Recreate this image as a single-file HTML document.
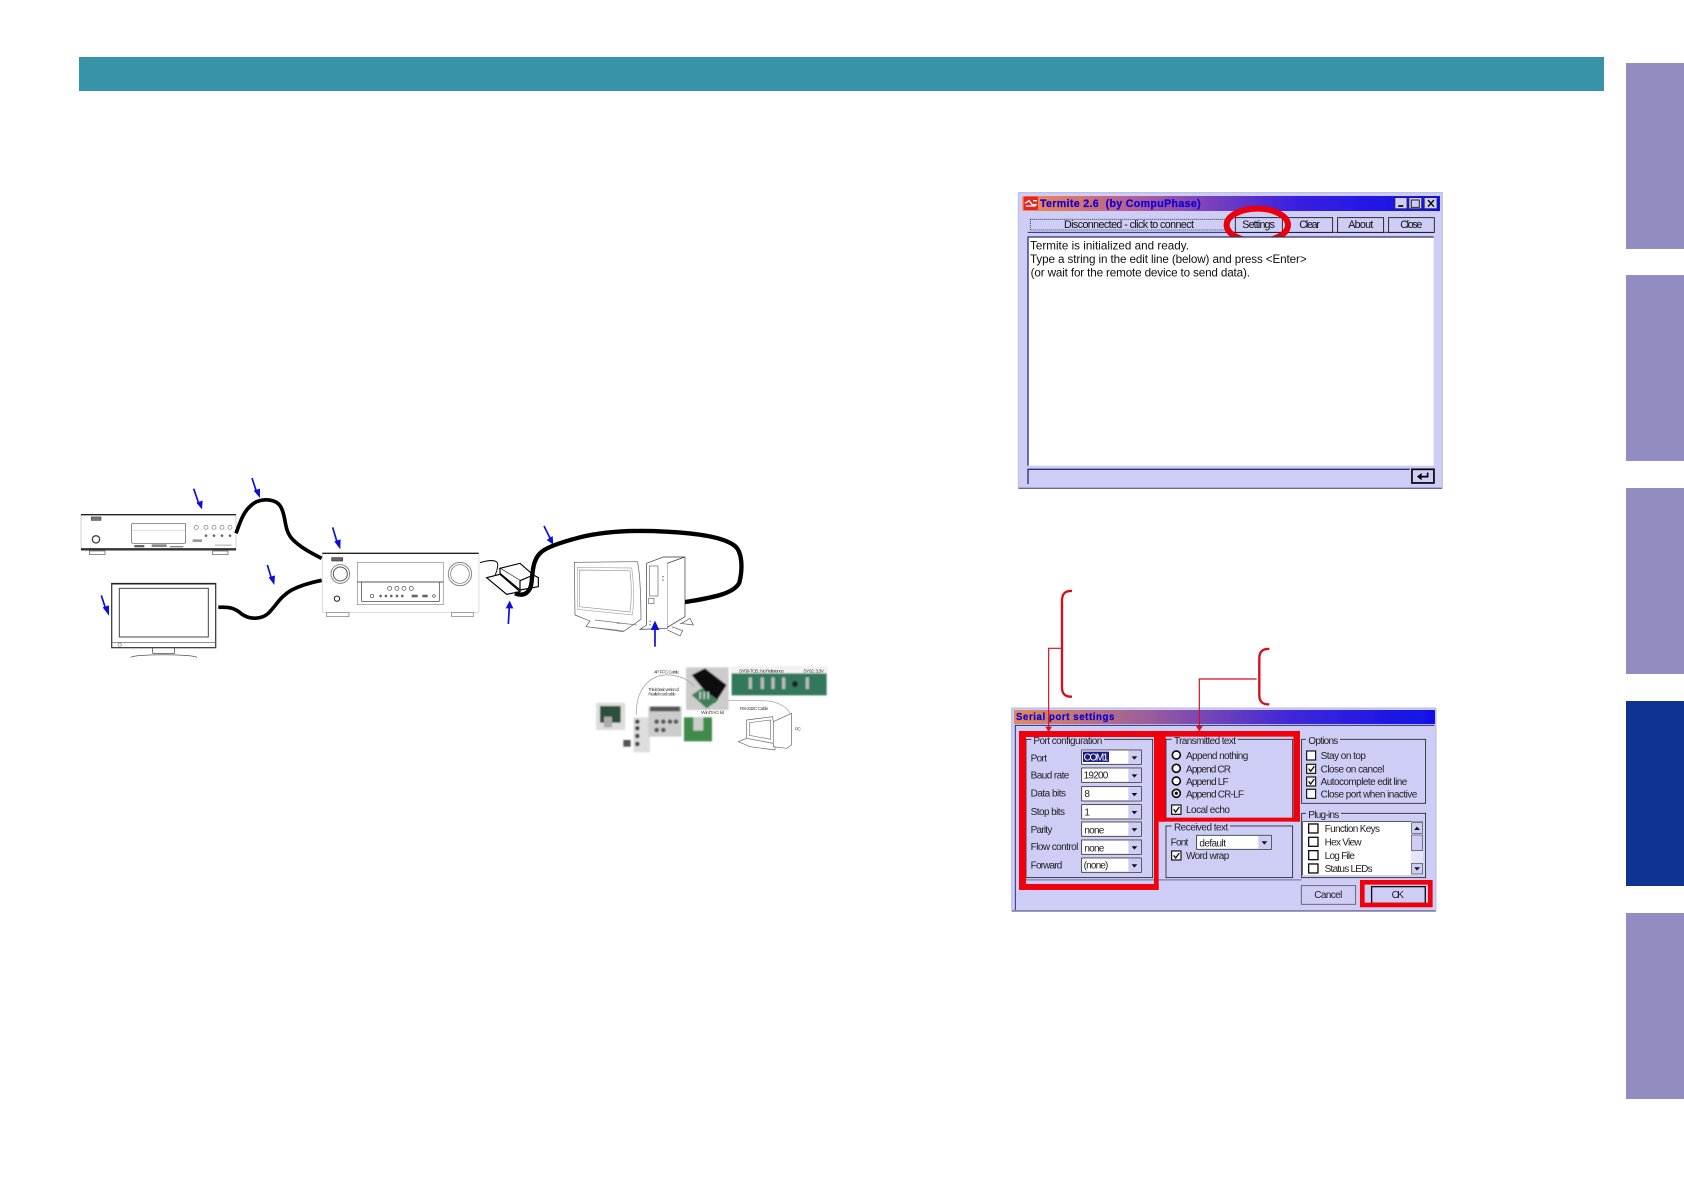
<!DOCTYPE html>
<html><head><meta charset="utf-8"><style>
html,body{margin:0;padding:0;background:#fff;width:1684px;height:1191px;overflow:hidden}
.a{position:absolute}
svg{position:absolute;left:0;top:0}
text{font-family:"Liberation Sans",sans-serif}
</style></head><body>
<div class="a" style="left:79px;top:57px;width:1525px;height:34px;background:#3892a8"></div>
<div class="a" style="left:1626px;top:63px;width:58px;height:186px;background:#928dc0"></div>
<div class="a" style="left:1626px;top:275px;width:58px;height:186px;background:#928dc0"></div>
<div class="a" style="left:1626px;top:488px;width:58px;height:186px;background:#928dc0"></div>
<div class="a" style="left:1626px;top:701px;width:58px;height:185px;background:#0f3390"></div>
<div class="a" style="left:1626px;top:913px;width:58px;height:186px;background:#928dc0"></div>
<svg width="1684" height="1191" viewBox="0 0 1684 1191" xmlns="http://www.w3.org/2000/svg">
<defs>
<filter id="b"><feGaussianBlur stdDeviation="1"/></filter>
<filter id="t"><feGaussianBlur stdDeviation=".7"/></filter>
<filter id="b2"><feGaussianBlur stdDeviation="2.4"/></filter>
<linearGradient id="g1" x1="0" x2="1" y1="0" y2="0"><stop offset="0" stop-color="#f58a4e"/><stop offset=".3" stop-color="#a85aa0"/><stop offset=".65" stop-color="#3a20e0"/><stop offset="1" stop-color="#1010e8"/></linearGradient>
<linearGradient id="g2" x1="0" x2="1" y1="0" y2="0"><stop offset="0" stop-color="#e08a5c"/><stop offset=".3" stop-color="#a06098"/><stop offset=".65" stop-color="#4028d8"/><stop offset="1" stop-color="#1010e8"/></linearGradient>
</defs>

<!-- Diagram left -->
<g transform="translate(70,470) scale(.3333)" filter="url(#b)" fill="none" stroke="#222" stroke-width="2">
<rect x="33" y="134" width="465" height="105" fill="#fff" stroke="#bbb"/>
<path d="M33 134H498" stroke="#222" stroke-width="4"/>
<path d="M33 238H498" stroke="#333" stroke-width="7"/>
<rect x="58" y="243" width="47" height="11" stroke="#555"/><rect x="428" y="243" width="46" height="11" stroke="#555"/>
<rect x="64" y="141" width="29" height="10" fill="#777" stroke="#444"/>
<circle cx="78" cy="208" r="11" stroke-width="4" stroke="#444"/>
<rect x="185" y="160" width="162" height="60" rx="4" stroke="#555"/><path d="M187 182H345" stroke="#ccc"/>
<g stroke="#777"><circle cx="379" cy="172" r="6"/><circle cx="408" cy="172" r="6"/><circle cx="432" cy="172" r="6"/><circle cx="456" cy="172" r="6"/><circle cx="480" cy="172" r="6"/></g>
<g fill="#666" stroke="none"><circle cx="408" cy="197" r="4"/><circle cx="432" cy="197" r="4"/><circle cx="456" cy="197" r="4"/><circle cx="480" cy="197" r="4"/><rect x="193" y="225" width="30" height="7"/><rect x="245" y="223" width="45" height="8" fill="#888"/><rect x="368" y="208" width="28" height="8" fill="#999"/><rect x="300" y="228" width="40" height="4" fill="#888"/><rect x="435" y="224" width="50" height="3" fill="#aaa"/></g>

<rect x="125" y="341" width="312" height="192" fill="#fff" stroke="#444" stroke-width="4"/>
<path d="M125 341H437" stroke-width="5"/>
<rect x="148" y="355" width="267" height="146" stroke="#444" stroke-width="3"/>
<path d="M125 517H437" stroke="#555"/><circle cx="149" cy="524" r="5" stroke="#888"/>
<path d="M248 533V550M314 533V550M248 550H314M182 562C200 552 360 552 381 562" stroke="#333"/>

<rect x="757" y="251" width="470" height="176" fill="#fff" stroke="#ccc"/>
<path d="M757 250H1226" stroke-width="4"/>
<rect x="785" y="263" width="33" height="10" fill="#666" stroke="#333"/>
<circle cx="811" cy="312" r="28" stroke="#888" stroke-width="3"/><circle cx="811" cy="312" r="21" stroke="#555" stroke-width="3"/>
<circle cx="1170" cy="312" r="35" stroke="#888" stroke-width="3"/><circle cx="1170" cy="312" r="28" stroke="#666" stroke-width="2"/>
<circle cx="801" cy="386" r="8" stroke-width="3"/>
<rect x="862" y="277" width="258" height="127" stroke="#888"/>
<rect x="875" y="336" width="233" height="58" stroke="#333"/>
<path d="M862 336H1120" stroke="#555" stroke-width="3"/>
<g stroke="#444"><circle cx="959" cy="355" r="6"/><circle cx="981" cy="355" r="6"/><circle cx="1002" cy="355" r="6"/><circle cx="1024" cy="355" r="6"/><circle cx="906" cy="378" r="5"/><circle cx="1092" cy="378" r="4"/></g>
<g fill="#666" stroke="none"><circle cx="932" cy="378" r="4"/><circle cx="948" cy="378" r="4"/><circle cx="964" cy="378" r="4"/><circle cx="981" cy="378" r="4"/><circle cx="997" cy="378" r="4"/><rect x="1025" y="374" width="18" height="8"/><rect x="1057" y="374" width="16" height="8"/></g>
<rect x="770" y="427" width="67" height="13" stroke="#777"/><rect x="1145" y="427" width="65" height="13" stroke="#777"/>

<path d="M498 190C510 160 520 115 560 95C585 85 620 88 632 110C650 140 640 175 665 205C690 232 725 250 755 265" stroke="#000" stroke-width="11"/>
<path d="M445 412C480 410 495 415 515 432C540 450 575 448 595 430C620 405 630 380 665 360C695 345 725 337 755 331" stroke="#000" stroke-width="11"/>
<g stroke="#0a0ae0" stroke-width="5" fill="#0a0ae0">
<path d="M371 56L388 105"/><path d="M379 98L398 92L396 118Z" stroke="none"/>
<path d="M546 24L561 70"/><path d="M551 62L570 56L570 84Z" stroke="none"/>
<path d="M788 172L803 222"/><path d="M793 214L812 208L811 238Z" stroke="none"/>
<path d="M592 285L606 330"/><path d="M596 322L615 316L613 345Z" stroke="none"/>
<path d="M94 376L108 420"/><path d="M98 412L117 406L117 437Z" stroke="none"/>
</g>
</g>

<!-- Diagram right -->
<g transform="translate(480,510) scale(.3333)" filter="url(#b)" fill="none" stroke="#222" stroke-width="2">
<path d="M0 158C20 152 45 148 52 158C56 170 48 190 42 203" stroke="#111" stroke-width="3"/>
<path d="M20 203L60 193L120 245L80 253Z" fill="#fff" stroke="#000" stroke-width="3.5"/>
<path d="M60 175L120 160L160 195L120 212Z" fill="#fff" stroke="#000" stroke-width="3.5"/>
<path d="M60 175V190L120 240V212M160 195L175 203V230L120 240" fill="#fff" stroke="#000" stroke-width="3.5"/>
<path d="M105 250C135 262 152 245 155 215C158 180 160 150 180 130C195 112 250 95 300 82C380 62 470 60 560 65C650 70 730 80 765 108C785 125 790 170 778 218C760 255 680 265 612 277" stroke="#000" stroke-width="13"/>
<path d="M283 157L472 155Q482 190 483 328L430 365L318 350L330 333L285 315Z" fill="#fff" stroke="#555"/>
<path d="M292 172L455 174Q466 250 457 315L292 298Z" stroke="#aaa" stroke-width="2"/>
<path d="M298 180L450 182Q458 250 450 306L298 290Z" stroke="#999" stroke-width="2"/>
<path d="M318 350L430 362M345 330L470 345M410 340h22" stroke="#777"/>
<path d="M500 160L550 141H615L562 160V355L480 358L500 345Z" fill="#fff" stroke="#333"/>
<path d="M562 160L615 141V320L562 352" fill="#fff" stroke="#333"/>
<rect x="508" y="168" width="26" height="90" stroke="#666"/><rect x="506" y="265" width="16" height="16" stroke="#666"/>
<path d="M562 360L600 378L608 362L575 350M600 340L640 345L630 325L605 340" stroke="#555" fill="#fff"/>
<g fill="#999" stroke="none"><rect x="546" y="198" width="6" height="4"/><rect x="546" y="208" width="6" height="4"/><rect x="508" y="332" width="5" height="4"/><rect x="508" y="342" width="5" height="4"/></g>
<g stroke="#0a0ae0" stroke-width="5" fill="#0a0ae0">
<path d="M192 48L212 88"/><path d="M200 90L218 78L220 104Z" stroke="none"/>
<path d="M85 342L88 290"/><path d="M77 295L89 272L100 295Z" stroke="none"/>
<path d="M525 410V355"/><path d="M512 360L525 332L538 360Z" stroke="none"/>
</g>
</g>

<!-- Thumbnail -->
<g transform="translate(590,660) scale(.3333)">
<g filter="url(#b2)">
<rect x="288" y="22" width="128" height="128" fill="#ccc"/>
<path d="M305 45L345 25L410 75L375 130Z" fill="#111"/>
<path d="M305 105L335 85L385 120L350 145Z" fill="#3d8058"/>
<g fill="#ccc"><rect x="328" y="95" width="5" height="22"/><rect x="340" y="95" width="5" height="22"/><rect x="352" y="95" width="5" height="22"/></g>
<rect x="425" y="22" width="285" height="84" fill="#33785a"/>
<rect x="425" y="22" width="285" height="18" fill="#f4f4f4"/>
<g fill="#bbb"><rect x="476" y="52" width="10" height="35"/><rect x="512" y="52" width="10" height="35"/><rect x="544" y="52" width="10" height="35"/><rect x="576" y="52" width="10" height="35"/><rect x="647" y="52" width="10" height="35"/></g>
<circle cx="615" cy="72" r="9" fill="#222"/>
<rect x="18" y="128" width="88" height="82" rx="6" fill="#ddd"/>
<rect x="30" y="138" width="62" height="50" fill="#2b4f3a"/>
<rect x="42" y="170" width="24" height="32" fill="#aaa"/>
<rect x="130" y="172" width="50" height="105" fill="#ddd"/>
<g fill="#444"><circle cx="142" cy="185" r="7"/><circle cx="142" cy="205" r="7"/><circle cx="142" cy="228" r="7"/><circle cx="142" cy="252" r="7"/></g>
<rect x="175" y="140" width="100" height="90" fill="#ccc"/>
<rect x="180" y="140" width="90" height="14" fill="#555"/>
<g fill="#555"><circle cx="200" cy="185" r="7"/><circle cx="220" cy="185" r="7"/><circle cx="240" cy="185" r="7"/><circle cx="258" cy="185" r="7"/><circle cx="200" cy="210" r="7"/><circle cx="220" cy="210" r="7"/></g>
<rect x="282" y="172" width="84" height="72" fill="#3f8a4c"/>
<rect x="310" y="172" width="30" height="40" fill="#ccc"/>
<rect x="100" y="240" width="22" height="20" fill="#555"/>
</g>
<g filter="url(#b)" fill="none" stroke="#999" stroke-width="2">
<path d="M140 165C135 90 180 40 240 45C275 48 295 60 312 78"/>
<path d="M415 122H520C560 122 590 140 600 160"/>
<path d="M470 180L548 170Q555 215 550 250L470 235Z" fill="#fff" stroke="#666"/>
<path d="M478 188L542 180V238L478 226Z" stroke="#777"/>
<path d="M470 235L445 245L480 260L555 270L555 250" stroke="#666"/>
<path d="M550 185L605 160V255L590 265L550 260Z" fill="#fff" stroke="#666"/>
</g>
<g filter="url(#b)" fill="#444" font-size="15">
<text x="192" y="40" textLength="75">4P FFC Cable</text>
<text x="447" y="37" textLength="135">SY06-TCB : No Reference</text>
<text x="640" y="37" textLength="62">SY02 : 3.3V</text>
<text x="175" y="93" textLength="92" font-size="13">This is basic version of</text>
<text x="175" y="107" textLength="82" font-size="13">Realtek cord cable</text>
<text x="333" y="162" textLength="70">WinlTAG kit</text>
<text x="450" y="150" textLength="85">RS-232C Cable</text>
<text x="615" y="212" textLength="18">PC</text>
</g>
</g>

<!-- Termite window -->
<g transform="translate(1005,180) scale(.3333)" filter="url(#t)">
<rect x="40" y="37" width="1272" height="889" fill="#cdcdf6"/>
<path d="M40 925H1312" stroke="#3a3a70" stroke-width="3"/>
<path d="M40 38H1312V925M40 38V925" fill="none" stroke="#b8b8e2" stroke-width="3"/>
<rect x="52" y="48" width="1253" height="45" fill="url(#g1)"/>
<rect x="56" y="50" width="43" height="40" rx="4" fill="#e82020"/>
<path d="M60 70L72 62L82 74H96M84 62H96M62 78H92" stroke="#fff" stroke-width="4" fill="none"/>
<text x="105" y="81" font-size="32" font-weight="700" fill="#0c00d4" stroke="#0c00d4" stroke-width=".6" textLength="482">Termite 2.6 &#160;(by CompuPhase)</text>
<g fill="#cdcdf6" stroke="#223" stroke-width="2"><rect x="1170" y="53" width="36" height="33"/><rect x="1212" y="53" width="38" height="33"/><rect x="1258" y="53" width="38" height="33"/></g>
<path d="M1180 78H1195" stroke="#000" stroke-width="5"/><rect x="1219" y="60" width="24" height="22" fill="none" stroke="#222" stroke-width="3"/><path d="M1269 60L1287 80M1287 60L1269 80" stroke="#000" stroke-width="4"/>
<path d="M68 157H1288" stroke="#2a2a70" stroke-width="3"/>
<rect x="76" y="118" width="590" height="32" fill="none" stroke="#222" stroke-width="2.5" stroke-dasharray="3 3"/>
<g fill="#cdcdf6" stroke="#111" stroke-width="2.5"><rect x="691" y="113" width="141" height="44"/><rect x="845" y="113" width="138" height="44"/><rect x="998" y="113" width="138" height="44"/><rect x="1151" y="113" width="137" height="44"/></g>
<g font-size="32" fill="#111">
<text x="177" y="144" textLength="390">Disconnected - click to connect</text>
<text x="712" y="144" textLength="98">Settings</text>
<text x="883" y="144" textLength="62">Clear</text>
<text x="1030" y="144" textLength="75">About</text>
<text x="1186" y="144" textLength="66">Close</text>
</g>
<ellipse cx="757" cy="135" rx="92" ry="49" fill="none" stroke="#e8000c" stroke-width="18"/>
<rect x="69" y="172" width="1217" height="685" fill="#fff"/>
<path d="M69 857V171H1286" fill="none" stroke="#2e2e78" stroke-width="4"/>
<g font-size="35" fill="#111">
<text x="75" y="209" textLength="477">Termite is initialized and ready.</text>
<text x="75" y="249" textLength="830">Type a string in the edit line (below) and press &lt;Enter&gt;</text>
<text x="77" y="290" textLength="658">(or wait for the remote device to send data).</text>
</g>
<path d="M69 912V868H1214" fill="none" stroke="#2e2e78" stroke-width="4"/>
<rect x="1221" y="868" width="66" height="41" fill="#cdcdf6" stroke="#000" stroke-width="5"/>
<path d="M1268 878V890H1245" fill="none" stroke="#000" stroke-width="5"/><path d="M1236 890L1250 879V901Z" fill="#000"/>
</g>

<!-- Serial dialog -->
<g transform="translate(1000,580) scale(.3333)" filter="url(#t)">
<rect x="35" y="383" width="1273" height="611" fill="#cdcdf6"/>
<path d="M35 993H1308" stroke="#3a3a70" stroke-width="3"/>
<path d="M35 384H1308V993M35 384V993" fill="none" stroke="#b8b8e2" stroke-width="3"/>
<rect x="42" y="390" width="1263" height="42" fill="url(#g2)"/>
<text x="48" y="420" font-size="29" font-weight="700" fill="#0c00d4" stroke="#0c00d4" stroke-width=".6" textLength="295">Serial port settings</text>
<path d="M46 990V436H1303" fill="none" stroke="#2e2e78" stroke-width="3"/>
<path d="M78 900H905" stroke="#2e2e78" stroke-width="2"/>
<g fill="none" stroke="#222" stroke-width="2.5">
<rect x="78" y="478" width="380" height="415"/>
<rect x="498" y="478" width="380" height="240"/>
<rect x="498" y="738" width="380" height="155"/>
<rect x="905" y="478" width="372" height="192"/>
<rect x="905" y="700" width="372" height="193"/>
</g>
<g fill="#cdcdf6"><rect x="94" y="470" width="218" height="20"/><rect x="515" y="470" width="198" height="20"/><rect x="515" y="730" width="175" height="20"/><rect x="918" y="470" width="102" height="20"/><rect x="918" y="692" width="105" height="20"/></g>
<g font-size="30" fill="#222">
<text x="100" y="492" textLength="207">Port configuration</text>
<text x="92" y="544" textLength="49">Port</text>
<text x="92" y="595" textLength="116">Baud rate</text>
<text x="92" y="650" textLength="106">Data bits</text>
<text x="92" y="705" textLength="103">Stop bits</text>
<text x="92" y="759" textLength="65">Parity</text>
<text x="92" y="810" textLength="143">Flow control</text>
<text x="92" y="865" textLength="95">Forward</text>
<text x="522" y="492" textLength="186">Transmitted text</text>
<text x="558" y="537" textLength="187">Append nothing</text>
<text x="558" y="577" textLength="135">Append CR</text>
<text x="558" y="615" textLength="128">Append LF</text>
<text x="558" y="652" textLength="174">Append CR-LF</text>
<text x="558" y="699" textLength="132">Local echo</text>
<text x="522" y="751" textLength="163">Received text</text>
<text x="512" y="796" textLength="53">Font</text>
<text x="558" y="837" textLength="130">Word wrap</text>
<text x="925" y="492" textLength="90">Options</text>
<text x="962" y="537" textLength="136">Stay on top</text>
<text x="962" y="577" textLength="191">Close on cancel</text>
<text x="962" y="615" textLength="260">Autocomplete edit line</text>
<text x="962" y="652" textLength="290">Close port when inactive</text>
<text x="925" y="714" textLength="93">Plug-ins</text>
</g>
<!-- combos -->
<g fill="#fff" stroke="#333" stroke-width="2.5">
<rect x="245" y="510" width="179" height="43"/><rect x="245" y="564" width="179" height="43"/><rect x="245" y="620" width="179" height="43"/><rect x="245" y="674" width="179" height="43"/><rect x="245" y="726" width="179" height="43"/><rect x="245" y="780" width="179" height="43"/><rect x="245" y="834" width="179" height="43"/><rect x="590" y="766" width="224" height="42"/>
</g>
<g fill="#cdcdf6"><rect x="385" y="512" width="38" height="40"/><rect x="385" y="566" width="38" height="40"/><rect x="385" y="622" width="38" height="40"/><rect x="385" y="676" width="38" height="40"/><rect x="385" y="728" width="38" height="40"/><rect x="385" y="782" width="38" height="40"/><rect x="385" y="836" width="38" height="40"/><rect x="775" y="768" width="38" height="38"/></g>
<g fill="#111"><path d="M395 529H412L403 539Z"/><path d="M395 583H412L403 593Z"/><path d="M395 639H412L403 649Z"/><path d="M395 693H412L403 703Z"/><path d="M395 745H412L403 755Z"/><path d="M395 799H412L403 809Z"/><path d="M395 853H412L403 863Z"/><path d="M785 784H802L793 794Z"/></g>
<rect x="249" y="515" width="78" height="31" fill="#1a1a80"/>
<g font-size="30" fill="#222">
<text x="251" y="541" fill="#fff" textLength="74">COM1</text>
<text x="251" y="595" textLength="74">19200</text>
<text x="253" y="651" textLength="16">8</text>
<text x="253" y="706" textLength="10">1</text>
<text x="253" y="760" textLength="60">none</text>
<text x="253" y="814" textLength="60">none</text>
<text x="251" y="866" textLength="74">(none)</text>
<text x="598" y="799" textLength="80">default</text>
</g>
<!-- radios -->
<g fill="#fff" stroke="#111" stroke-width="5"><circle cx="529" cy="525" r="12"/><circle cx="529" cy="565" r="12"/><circle cx="529" cy="603" r="12"/><circle cx="529" cy="640" r="12"/></g>
<circle cx="529" cy="640" r="5" fill="#111"/>
<!-- checkboxes -->
<g fill="#fff" stroke="#111" stroke-width="3.5">
<rect x="515" y="675" width="28" height="28"/><rect x="515" y="813" width="28" height="27"/>
<rect x="920" y="513" width="27" height="27"/><rect x="920" y="553" width="27" height="27"/><rect x="920" y="591" width="27" height="27"/><rect x="920" y="628" width="27" height="27"/>
</g>
<g fill="none" stroke="#111" stroke-width="4"><path d="M521 688L527 696L538 681"/><path d="M521 826L527 834L538 819"/><path d="M926 566L932 574L943 559"/><path d="M926 604L932 612L943 597"/></g>
<!-- list -->
<rect x="908" y="725" width="325" height="160" fill="#fff"/>
<path d="M908 885V725H1270" fill="none" stroke="#333" stroke-width="2"/>
<rect x="1233" y="725" width="37" height="160" fill="#e4e4fb"/>
<g fill="#cdcdf6" stroke="#444" stroke-width="2"><rect x="1235" y="728" width="33" height="32"/><rect x="1235" y="765" width="33" height="47"/><rect x="1235" y="850" width="33" height="32"/></g>
<path d="M1243 750H1260L1251 740Z" fill="#111"/><path d="M1243 862H1260L1251 872Z" fill="#111"/>
<g fill="#fff" stroke="#111" stroke-width="4"><rect x="926" y="732" width="28" height="27"/><rect x="926" y="772" width="28" height="27"/><rect x="926" y="812" width="28" height="27"/><rect x="926" y="852" width="28" height="27"/></g>
<g font-size="30" fill="#222"><text x="974" y="756" textLength="166">Function Keys</text><text x="974" y="796" textLength="111">Hex View</text><text x="974" y="837" textLength="91">Log File</text><text x="974" y="876" textLength="144">Status LEDs</text></g>
<!-- buttons -->
<rect x="904" y="917" width="163" height="56" fill="#cdcdf6" stroke="#555" stroke-width="2.5"/>
<rect x="1115" y="920" width="161" height="50" fill="#cdcdf6" stroke="#111" stroke-width="4"/>
<g font-size="30" fill="#222"><text x="943" y="954" textLength="84">Cancel</text><text x="1175" y="954" textLength="37">OK</text></g>
<!-- red -->
<g fill="#f00008">
<rect x="57" y="453" width="419" height="18"/><rect x="57" y="453" width="21" height="477"/><rect x="57" y="912" width="419" height="18"/><rect x="462" y="453" width="14" height="477"/>
<rect x="466" y="453" width="434" height="17"/><rect x="466" y="453" width="31" height="272"/><rect x="466" y="713" width="434" height="12"/><rect x="880" y="453" width="20" height="272"/>
</g>
<rect x="1087" y="907" width="204" height="68" fill="none" stroke="#f00008" stroke-width="14"/>
<g fill="none" stroke="#d8101c">
<path d="M216 33Q186 31 186 62V322Q186 352 216 350" stroke-width="7"/>
<path d="M808 207Q778 205 778 235V345Q778 375 808 373" stroke-width="7"/>
<path d="M184 205H146V445" stroke-width="3.5"/>
<path d="M770 297H598V445" stroke-width="3.5"/>
</g>
<path d="M136 440H156L146 456Z" fill="#d8101c"/><path d="M588 438H608L598 454Z" fill="#d8101c"/>
</g>
</svg>
</body></html>
